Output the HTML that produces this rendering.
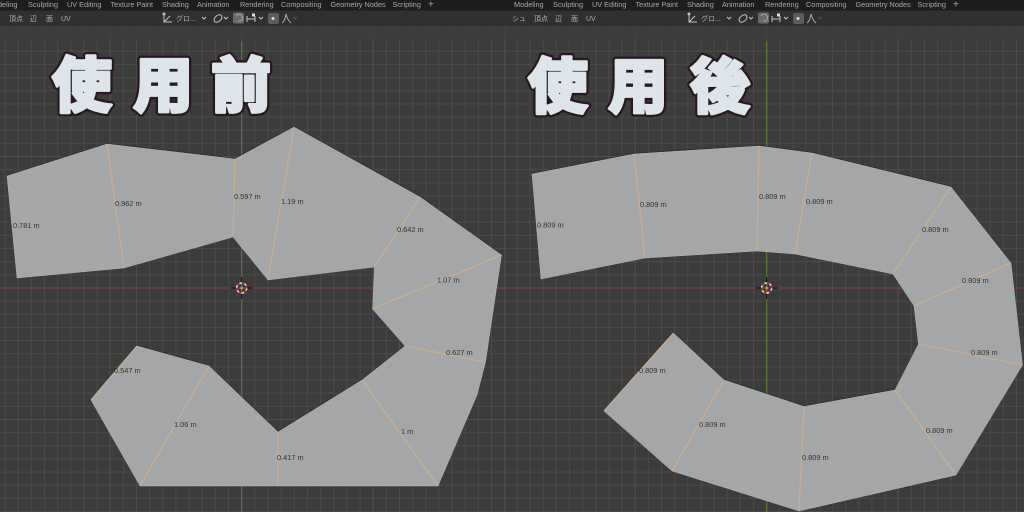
<!DOCTYPE html>
<html><head><meta charset="utf-8"><style>
html,body{margin:0;padding:0;background:#3c3c3c}
svg{display:block}
.tab{font:7.3px "Liberation Sans",sans-serif;fill:#a8a8a8}
.tb{font:7px "Liberation Sans","Noto Sans CJK JP",sans-serif;fill:#b0b0b0}
.lb{font:7.4px "Liberation Sans",sans-serif;fill:#333}
.mesh{fill:#a5a6a7;stroke:#b4b5b6;stroke-width:.5}
.sh{fill:#2b2b2b}
.seam{stroke:#c8ad90;stroke-width:1.3;fill:none}
.ttl{font:900 60px "Noto Sans CJK JP","Liberation Sans",sans-serif;paint-order:stroke;stroke-linejoin:round}
.o{fill:#2a1a20;stroke:#2a1a20;stroke-width:7.5}
.f{fill:#dde5ea;stroke:#dde5ea;stroke-width:2.8}
</style></head><body>
<svg width="1024" height="512" viewBox="0 0 1024 512" xmlns="http://www.w3.org/2000/svg">
<defs>
<pattern id="g" width="13.15" height="13.15" patternUnits="userSpaceOnUse" x="4.5" y="11.35">
<path d="M.5 0V13.15M0 .5H13.15" stroke="#4a4a4a" stroke-width="1" fill="none"/>
</pattern>
<pattern id="G" width="131.5" height="131.5" patternUnits="userSpaceOnUse" x="109.7" y="24.5">
<path d="M.5 0V131.5M0 .5H131.5" stroke="#4f4f4f" stroke-width="1" fill="none"/>
</pattern>
<pattern id="g2" width="13.15" height="13.15" patternUnits="userSpaceOnUse" x="3.5" y="11.35">
<path d="M.5 0V13.15M0 .5H13.15" stroke="#4a4a4a" stroke-width="1" fill="none"/>
</pattern>
<pattern id="G2" width="131.5" height="131.5" patternUnits="userSpaceOnUse" x="108.7" y="24.5">
<path d="M.5 0V131.5M0 .5H131.5" stroke="#4f4f4f" stroke-width="1" fill="none"/>
</pattern>
<polygon id="m1" points="7,176 107,144 235,159 294,127 420,197 501.500,255 485.500,362 477,395 438,486 140,486 91,400 137,346 209,366 278,432 362,380 405,346 372.500,309 374.500,267 268,280 233,237 124,268 17,278"/>
<polygon id="m2" points="532,174 634,154 759,146 812,153 951,187 1011,263 1022.500,365 956,475 799,511 672,471 604,411 673.500,333 724,380 804,406.500 895,390 918.500,344 914,306 893,274 795,254 757,251 645,258 541,279"/>
</defs>
<rect width="1024" height="512" fill="#3c3c3c"/>
<rect x="0" y="26" width="512" height="486" fill="url(#g)"/>
<rect x="0" y="26" width="512" height="486" fill="url(#G)"/>
<rect x="512" y="26" width="512" height="486" fill="url(#g2)"/>
<rect x="512" y="26" width="512" height="486" fill="url(#G2)"/>
<rect y="26" width="1024" height="15" fill="#3c3c3c" opacity=".7"/>
<!-- header -->
<rect width="1024" height="10.5" fill="#1d1d1d"/>
<rect y="10.5" width="1024" height="15.5" fill="#303030"/>
<!-- axes -->
<path d="M241.7 41V512M766.7 41V512" stroke="#5f7f32" stroke-width="1"/>
<path d="M0 288H1024" stroke="#84414a" stroke-width="1"/>

<!-- tabs -->
<g class="tab">
<text x="-2" y="7">deling</text><text x="28" y="7">Sculpting</text><text x="67" y="7">UV Editing</text><text x="110.500" y="7">Texture Paint</text><text x="162" y="7">Shading</text><text x="197" y="7">Animation</text><text x="240" y="7">Rendering</text><text x="281" y="7">Compositing</text><text x="330.500" y="7">Geometry Nodes</text><text x="392.500" y="7">Scripting</text><text x="428" y="7.500" font-size="10">+</text>
<text x="514" y="7">Modeling</text><text x="553" y="7">Sculpting</text><text x="592" y="7">UV Editing</text><text x="635.500" y="7">Texture Paint</text><text x="687" y="7">Shading</text><text x="722" y="7">Animation</text><text x="765" y="7">Rendering</text><text x="806" y="7">Compositing</text><text x="855.500" y="7">Geometry Nodes</text><text x="917.500" y="7">Scripting</text><text x="953" y="7.500" font-size="10">+</text>
</g>
<!-- toolbar -->
<g class="tb">
<text x="9" y="21">頂点</text><text x="30" y="21">辺</text><text x="46" y="21">面</text><text x="61" y="21">UV</text>
<text x="176" y="21">グロ...</text>
<text x="512" y="21">シュ</text><text x="534" y="21">頂点</text><text x="555" y="21">辺</text><text x="571" y="21">面</text><text x="586" y="21">UV</text>
<text x="701" y="21">グロ...</text>
</g>
<g fill="none" stroke="#c4c4c4" stroke-width="1">
<path d="M164 14V22H172M164 22L170 16"/><circle cx="164" cy="14" r="1" fill="#c4c4c4"/>
<path d="M202 17l2 2 2-2"/>
<ellipse cx="218" cy="18.500" rx="4.500" ry="3" transform="rotate(-40 218 18.500)"/>
<path d="M224 17l2 2 2-2"/>
<rect x="233" y="12.500" width="11" height="11" rx="2" fill="#6a6a6a" stroke="none"/>
<path d="M236 16a3.500 3.500 0 1 1 2 5" stroke="#a5a5a5"/>
<path d="M247 16V22M255 16V22M247 19H255"/>
<rect x="252" y="13.500" width="3" height="3" fill="#e4e4e4" stroke="none"/>
<path d="M259 17l2 2 2-2"/>
<rect x="268" y="13" width="11" height="11" rx="2" fill="#5c5c5c" stroke="none"/>
<circle cx="273" cy="18.500" r="1.500" fill="#d8d8d8" stroke="none"/>
<path d="M282 23Q285 21 286 14Q288 21 291 23" stroke="#aaa"/>
<path d="M293 17l2 2 2-2" stroke="#555"/>
</g>
<g fill="none" stroke="#c4c4c4" stroke-width="1">
<path d="M689 14V22H697M689 22L695 16"/><circle cx="689" cy="14" r="1" fill="#c4c4c4"/>
<path d="M727 17l2 2 2-2"/>
<ellipse cx="743" cy="18.500" rx="4.500" ry="3" transform="rotate(-40 743 18.500)"/>
<path d="M749 17l2 2 2-2"/>
<rect x="758" y="12.500" width="11" height="11" rx="2" fill="#6a6a6a" stroke="none"/>
<path d="M761 16a3.500 3.500 0 1 1 2 5" stroke="#a5a5a5"/>
<path d="M772 16V22M780 16V22M772 19H780"/>
<rect x="777" y="13.500" width="3" height="3" fill="#e4e4e4" stroke="none"/>
<path d="M784 17l2 2 2-2"/>
<rect x="793" y="13" width="11" height="11" rx="2" fill="#5c5c5c" stroke="none"/>
<circle cx="798" cy="18.500" r="1.500" fill="#d8d8d8" stroke="none"/>
<path d="M807 23Q810 21 811 14Q813 21 816 23" stroke="#aaa"/>
<path d="M818 17l2 2 2-2" stroke="#555"/>
</g>

<!-- meshes -->
<use href="#m1" class="sh" transform="translate(0 -1)"/>
<use href="#m1" class="mesh"/>
<g class="seam">
<path d="M107,144L124,268M235,159L233,237M294,127L268,280M420,197L374.500,267M501.500,255L372.500,309M405,346L485.500,362M362,380L438,486M278,432V486M209,366L140,486M137,346L91,400"/>
</g>
<use href="#m2" class="sh" transform="translate(0 -1)"/>
<use href="#m2" class="mesh"/>
<g class="seam">
<path d="M634,154L645,258M759,146L757,251M812,153L795,254M951,187L893,274M1011,263L914,306M918.500,344L1022.500,365M895,390L956,475M804,406.500L799,511M724,380L672,471M673.500,333L604,411"/>
</g>

<!-- labels -->
<g class="lb">
<text x="13" y="228">0.781 m</text><text x="115" y="206">0.962 m</text><text x="234" y="199">0.597 m</text><text x="281" y="204">1.19 m</text>
<text x="397" y="232">0.642 m</text><text x="437" y="282.500">1.07 m</text><text x="446" y="355">0.627 m</text><text x="114" y="373">0.547 m</text>
<text x="174" y="427">1.06 m</text><text x="277" y="460">0.417 m</text><text x="401" y="434">1 m</text>
<text x="537" y="227.500">0.809 m</text><text x="640" y="207">0.809 m</text><text x="759" y="199">0.809 m</text><text x="806" y="204">0.809 m</text>
<text x="922" y="232">0.809 m</text><text x="962" y="283">0.809 m</text><text x="971" y="355">0.809 m</text><text x="639" y="373">0.809 m</text>
<text x="699" y="427">0.809 m</text><text x="802" y="460">0.809 m</text><text x="926" y="433">0.809 m</text>
</g>

<!-- 3D cursors -->
<g fill="none">
<circle cx="241.700" cy="288" r="5" stroke="#eee" stroke-width="1.500" stroke-dasharray="3 2.200"/>
<circle cx="241.700" cy="288" r="5" stroke="#b8303a" stroke-width="1.500" stroke-dasharray="3 2.200" stroke-dashoffset="2.600"/>
<path d="M231 288h5M247.500 288h5M241.700 277v5M241.700 294v5" stroke="#111" stroke-width="1"/>
<circle cx="241.700" cy="288" r="1.300" fill="#e8a030"/>
<circle cx="766.700" cy="288" r="5" stroke="#eee" stroke-width="1.500" stroke-dasharray="3 2.200"/>
<circle cx="766.700" cy="288" r="5" stroke="#b8303a" stroke-width="1.500" stroke-dasharray="3 2.200" stroke-dashoffset="2.600"/>
<path d="M756 288h5M772.500 288h5M766.700 277v5M766.700 294v5" stroke="#111" stroke-width="1"/>
<circle cx="766.700" cy="288" r="1.300" fill="#e8a030"/>
</g>

<!-- titles -->
<text class="ttl o" x="52 133 211" y="107">使用前</text>
<text class="ttl f" x="52 133 211" y="107">使用前</text>
<text class="ttl o" x="528 608 690" y="108">使用後</text>
<text class="ttl f" x="528 608 690" y="108">使用後</text>
</svg>
</body></html>
